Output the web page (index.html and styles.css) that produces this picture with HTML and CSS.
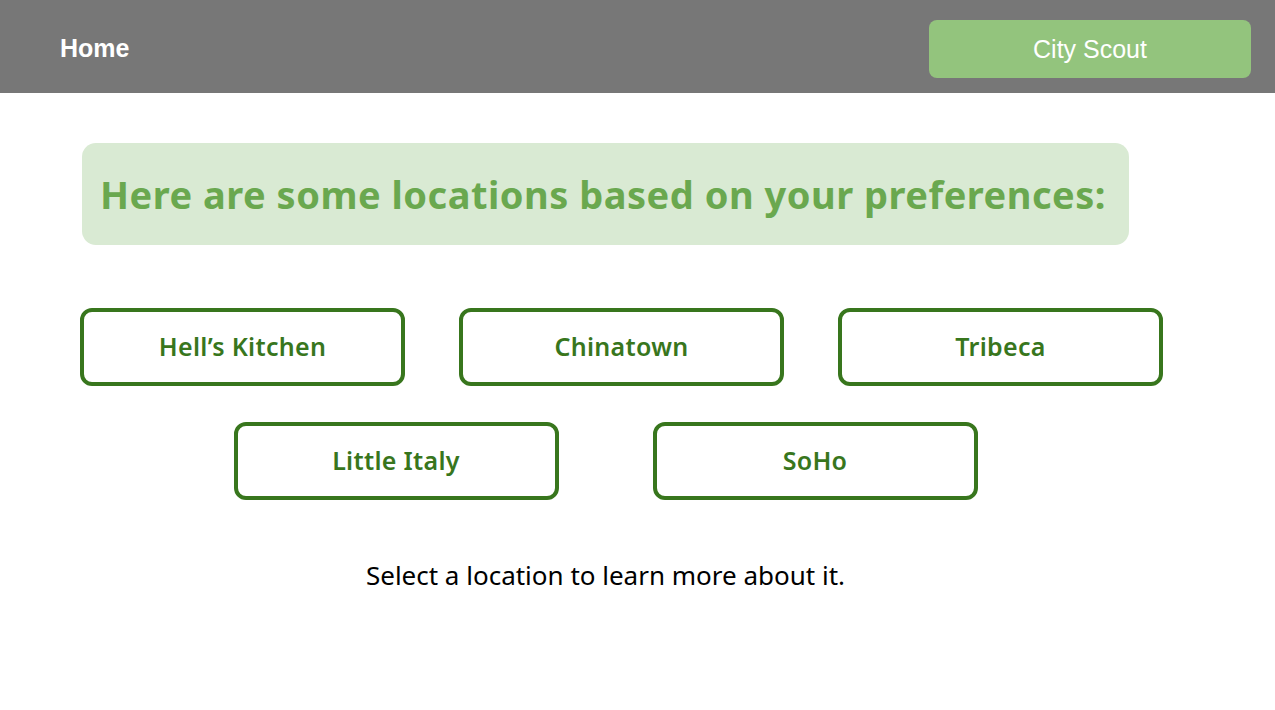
FILE: index.html
```html
<!DOCTYPE html>
<html>
<head>
<meta charset="utf-8">
<link rel="stylesheet" href="styles.css">
</head>
<body>
<header class="topbar">
  <a class="home">Home</a>
  <a class="brand">City Scout</a>
</header>
<main class="content">
  <div class="banner">
    <h1 class="banner-title">Here are some locations based on your preferences:</h1>
  </div>
  <div class="row row-first">
    <button class="loc">Hell’s Kitchen</button>
    <button class="loc">Chinatown</button>
    <button class="loc">Tribeca</button>
  </div>
  <div class="row row-second">
    <button class="loc">Little Italy</button>
    <button class="loc">SoHo</button>
  </div>
  <p class="hint">Select a location to learn more about it.</p>
</main>
</body>
</html>
```
FILE: styles.css
```css
* { box-sizing: border-box; }
html, body { margin: 0; padding: 0; }
body {
  width: 1275px;
  height: 710px;
  background: #ffffff;
  font-family: "Noto Sans", "Open Sans", sans-serif;
  overflow: hidden;
}
.topbar {
  height: 93px;
  background: #777777;
  display: flex;
  align-items: center;
  justify-content: space-between;
  padding: 0 24px 0 60px;
  font-family: "Liberation Sans", Arial, sans-serif;
}
.home {
  color: #ffffff;
  font-weight: bold;
  font-size: 25px;
  margin-top: 3px;
}
.brand {
  width: 322px;
  height: 58px;
  background: #93c47d;
  color: #ffffff;
  font-size: 25px;
  border-radius: 8px;
  display: flex;
  align-items: center;
  justify-content: center;
  margin-top: 5px;
}
.content {
  width: 1047px;
  margin-left: 82px;
  padding-top: 50px;
}
.banner {
  height: 102px;
  background: #d9ead3;
  border-radius: 14px;
  display: flex;
  align-items: center;
  padding-left: 18px;
}
.banner-title {
  margin: 0;
  color: #6aa84f;
  font-size: 38px;
  font-weight: 700;
  letter-spacing: 0.5px;
  white-space: nowrap;
}
.row {
  display: flex;
}
.row-first {
  margin-top: 63px;
  margin-left: -2px;
  gap: 54px;
}
.row-second {
  margin-top: 36px;
  justify-content: center;
  gap: 94px;
}
.loc {
  flex: none;
  width: 325px;
  height: 78px;
  border: 4px solid #38761d;
  border-radius: 12px;
  background: #ffffff;
  color: #38761d;
  font-family: "Noto Sans", "Open Sans", sans-serif;
  font-size: 25px;
  font-weight: 600;
  letter-spacing: 0.3px;
  padding: 0 0 3px;
}
.hint {
  margin: 57px 0 0;
  text-align: center;
  font-size: 26px;
  color: #000000;
}
```
